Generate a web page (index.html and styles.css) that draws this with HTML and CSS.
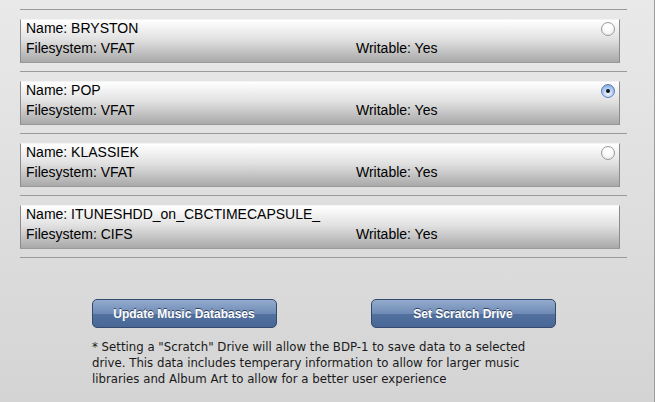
FILE: index.html
```html
<!DOCTYPE html>
<html lang="en">
<head>
  <meta charset="UTF-8" />
  <title>Drives</title>
  <link rel="stylesheet" href="styles.css">
</head>
<body>
  <div class="page">
    <div class="drive-list">
      <div class="drive">
        <div class="card">
          <span>Name: BRYSTON</span>
          <span class="radio"></span>
          <span>Filesystem: VFAT</span>
          <span>Writable: Yes</span>
        </div>
      </div>
      <div class="drive">
        <div class="card">
          <span>Name: POP</span>
          <span class="radio checked"></span>
          <span>Filesystem: VFAT</span>
          <span>Writable: Yes</span>
        </div>
      </div>
      <div class="drive">
        <div class="card">
          <span>Name: KLASSIEK</span>
          <span class="radio"></span>
          <span>Filesystem: VFAT</span>
          <span>Writable: Yes</span>
        </div>
      </div>
      <div class="drive">
        <div class="card">
          <span>Name: ITUNESHDD_on_CBCTIMECAPSULE_</span>
          <span></span>
          <span>Filesystem: CIFS</span>
          <span>Writable: Yes</span>
        </div>
      </div>
    </div>

    <div class="actions">
      <button type="button">Update Music Databases</button>
      <button type="button">Set Scratch Drive</button>
    </div>

    <p class="note">* Setting a "Scratch" Drive will allow the BDP-1 to save data to a selected drive. This data includes temperary information to allow for larger music libraries and Album Art to allow for a better user experience</p>
  </div>
</body>
</html>
```

FILE: styles.css
```css
/* General Styles */
body {
  margin: 0;
  font-family: "Liberation Sans", Arial, sans-serif;
  color: #000;
}

.page {
  width: 655px;
  height: 402px;
  box-sizing: border-box;
  border-right: 1px solid #9c9c9c;
  background: linear-gradient(to bottom, #e9e9e9, #d4d4d4);
  padding-top: 9px;
}

/* Drive list */
.drive-list {
  width: 607px;
  margin-left: 20px;
  border-top: 1px solid #9a9a9a;
}

.drive {
  padding: 9px 7px 8px 0;
  border-bottom: 1px solid #9a9a9a;
}

.card {
  display: grid;
  grid-template-columns: 330px 1fr;
  grid-auto-rows: 20px;
  align-items: start;
  padding: 0 4px 0 5px;
  box-sizing: border-box;
  height: 44px;
  border: 1px solid #8c8c8c;
  border-top-color: #f4f4f4;
  border-bottom-color: #9a9a9a;
  background: linear-gradient(to bottom, #ffffff 0%, #e2e2e2 45%, #a9a9a9 100%);
  font-size: 14px;
  line-height: 16px;
}

.radio {
  justify-self: end;
  margin-top: 2px;
  width: 12px;
  height: 12px;
  border: 1px solid #9a9a9a;
  border-radius: 50%;
  background: radial-gradient(circle at 50% 35%, #ffffff 30%, #e4e4e4 100%);
  position: relative;
}

.radio.checked {
  border-color: #5b7fb5;
  background: radial-gradient(circle at 50% 70%, #e6f0fc 10%, #a9c8f0 55%, #6d9ad8 100%);
}

.radio.checked::after {
  content: "";
  position: absolute;
  left: 4px;
  top: 4px;
  width: 4px;
  height: 4px;
  border-radius: 50%;
  background: #111;
}

/* Buttons */
.actions {
  display: flex;
  justify-content: center;
  gap: 94px;
  width: 607px;
  margin: 41px 0 0 20px;
}

.actions button {
  width: 185px;
  height: 29px;
  border: 1px solid #34496c;
  border-radius: 5px;
  background: linear-gradient(to bottom, #93abcd 0%, #6f8bb6 50%, #52719f 52%, #486796 100%);
  color: #fff;
  font-family: "Liberation Sans", Arial, sans-serif;
  font-size: 12px;
  font-weight: bold;
  text-shadow: 0 -1px 0 #2c3f5e;
  cursor: pointer;
}

/* Note */
.note {
  width: 466px;
  margin: 11px 0 0 92px;
  font-family: "DejaVu Sans", sans-serif;
  font-size: 11.75px;
  line-height: 16px;
  color: #1a1a1a;
}
```
